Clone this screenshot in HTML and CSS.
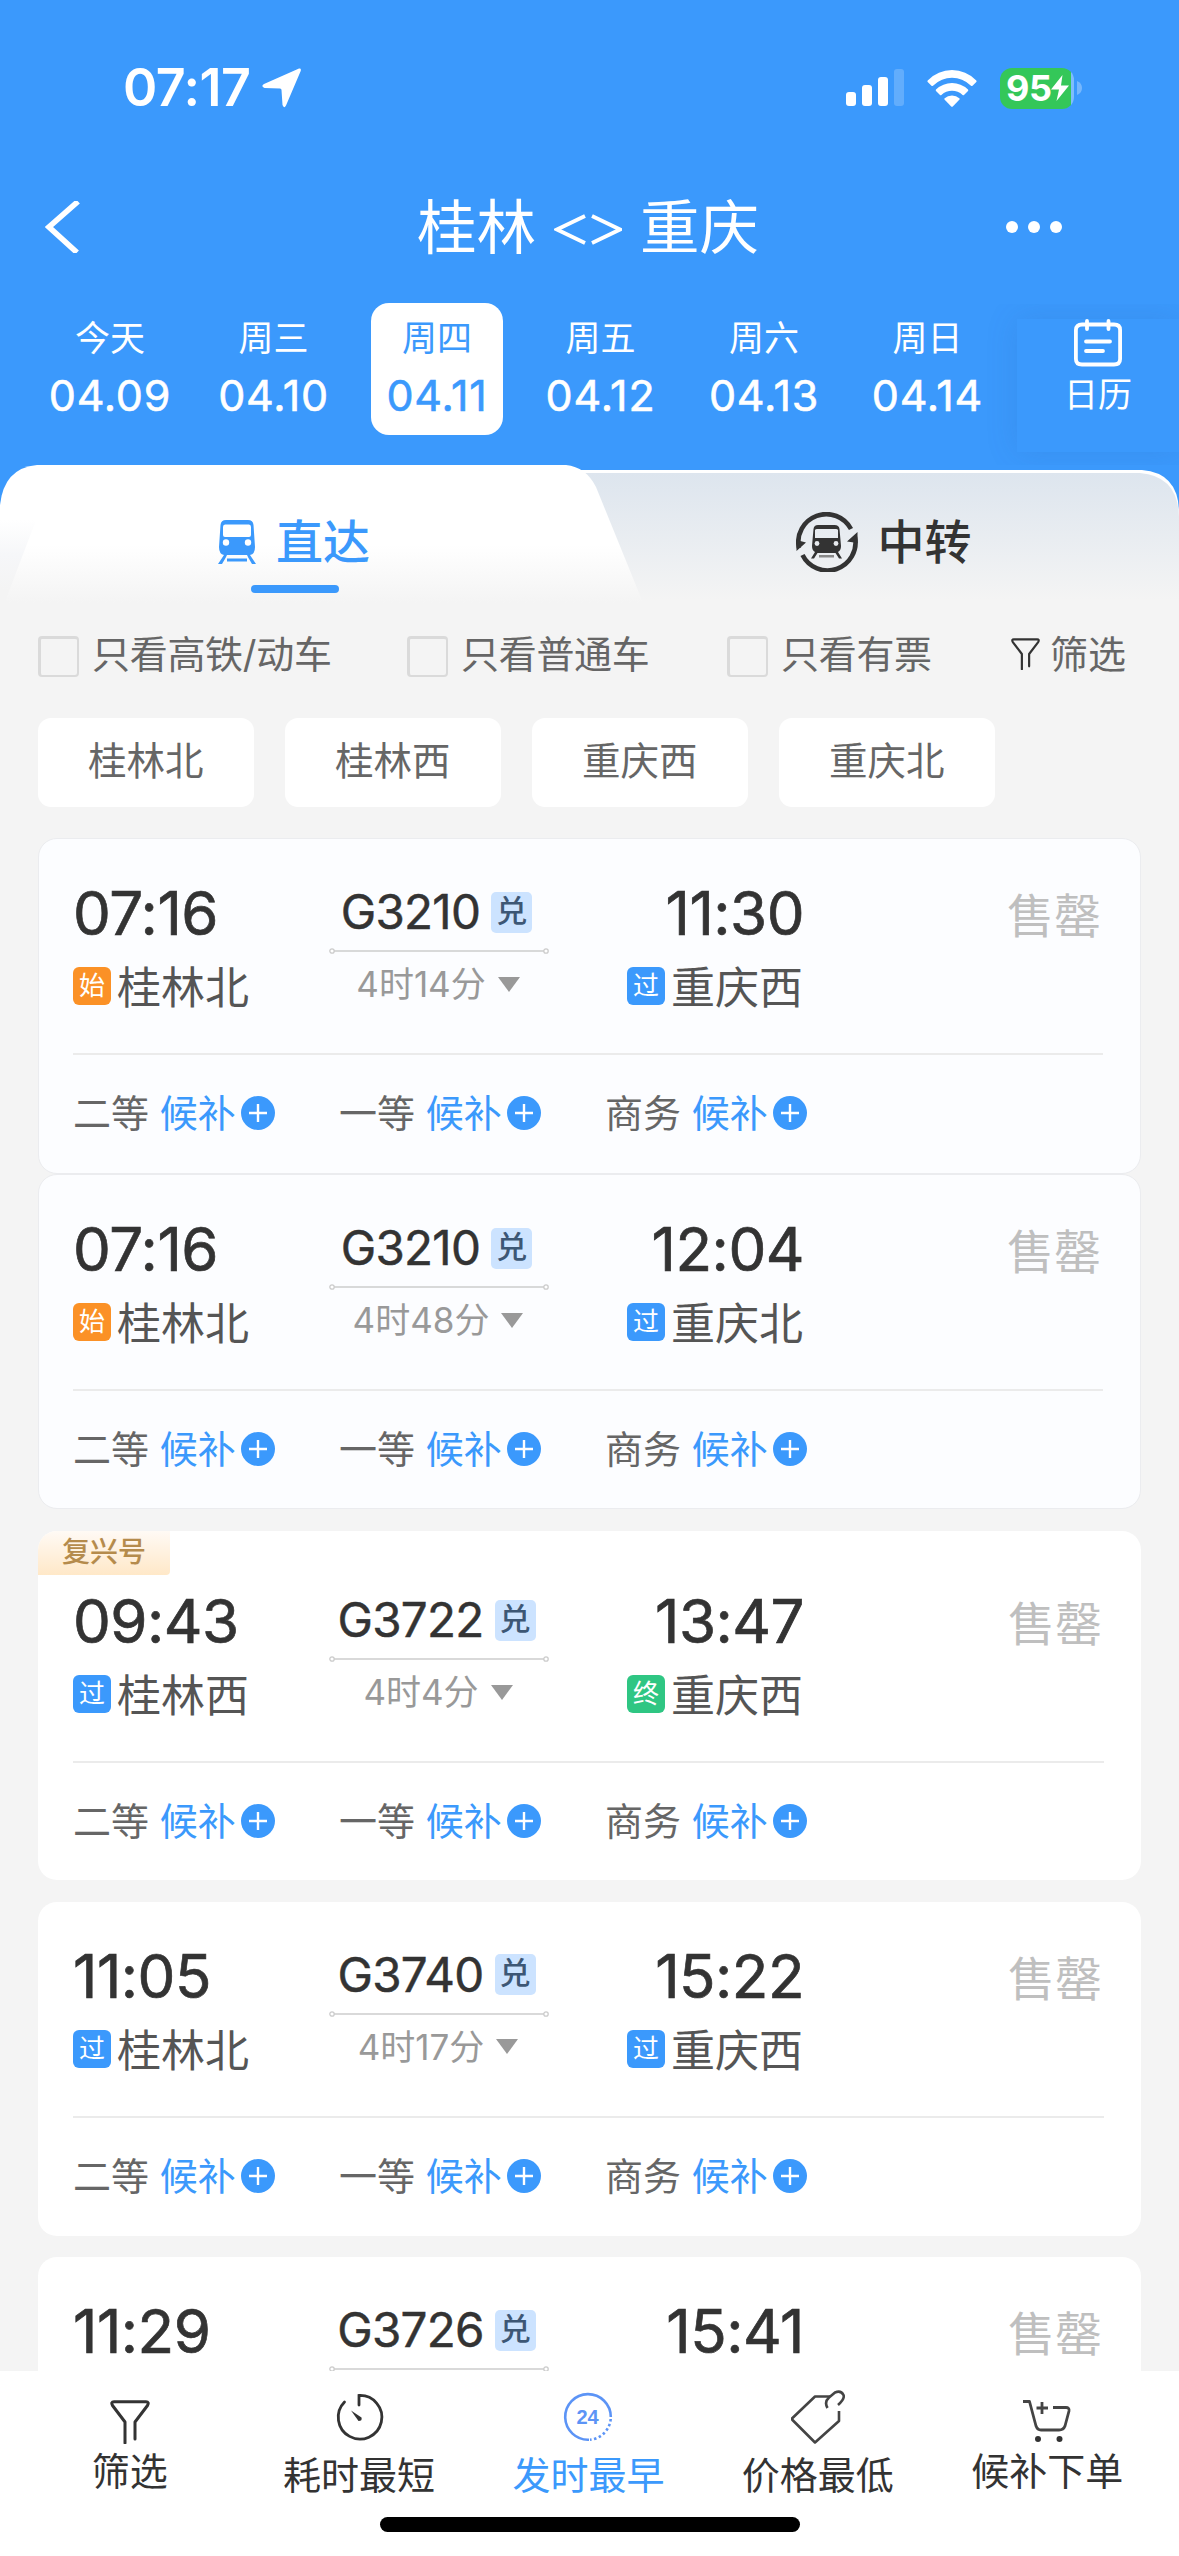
FILE: index.html
```
<!doctype html>
<html lang="zh-CN">
<head>
<meta charset="utf-8">
<meta name="viewport" content="width=device-width, initial-scale=1">
<title>桂林 - 重庆</title>
<link rel="stylesheet" href="styles.css">
</head>
<body>

<!-- shared icons -->
<svg class="sprite">
	<symbol id="funnel" viewBox="0 0 40 44">
		<path d="M15 43V22L2.500 5.500Q.500 1.800 4 1.800H36Q39.500 1.800 37.500 5.500L25 22V39" fill="none" stroke="#333" stroke-width="3" stroke-linecap="round" stroke-linejoin="round"/>
	</symbol>
	<symbol id="plus" viewBox="0 0 34 34">
		<circle cx="17" cy="17" r="17" fill="#3b99fc"/>
		<path d="M8 17H26M17 8V26" stroke="#fff" stroke-width="2.400"/>
	</symbol>
	<symbol id="line" viewBox="0 0 220 6">
		<path d="M5 3H215" stroke="#ccc" stroke-width="1.500"/>
		<circle cx="3" cy="3" r="2.200" fill="#fff" stroke="#ccc" stroke-width="1.300"/>
		<circle cx="217" cy="3" r="2.200" fill="#fff" stroke="#ccc" stroke-width="1.300"/>
	</symbol>
	<symbol id="down" viewBox="0 0 22 15">
		<path d="M0 0H22L11 15Z" fill="#999"/>
	</symbol>
</svg>

<div class="app">

	<header class="header">
		<div class="status">
			<span class="clock">07:17</span>
			<svg class="arrow" viewBox="0 0 39 40"><path d="M37 .500Q39.500 0 38.700 3L24 37.500Q22 41 20.500 37L19.500 22Q19.500 20.500 18 20.500L2.500 20Q-1.500 18.500 2 16Z" fill="#fff"/></svg>
			<svg class="signal" viewBox="0 0 58 38">
				<g fill="#fff">
					<rect x="0" y="23" width="10" height="14" rx="3"/>
					<rect x="16" y="16" width="10" height="21" rx="3"/>
					<rect x="32" y="8" width="10" height="29" rx="3"/>
					<rect x="48" y="0" width="10" height="37" rx="3" opacity=".2"/>
				</g>
			</svg>
			<svg class="wifi" viewBox="0 0 50 37">
				<g fill="#fff">
					<path d="M.700 10.500Q11 0 25 0T49.300 10.500Q50 11.300 49.300 12L45.500 15.800Q44.700 16.400 44 15.700Q35.500 7.800 25 7.800T6 15.700Q5.300 16.400 4.500 15.800L.700 12Q0 11.300 .700 10.500Z"/>
					<path d="M9 19.500Q16 13 25 13T41 19.500Q41.600 20.200 41 21L37 25Q36.300 25.500 35.600 24.900Q31 20.800 25 20.800T14.400 24.900Q13.700 25.500 13 25L9 21Q8.400 20.200 9 19.500Z"/>
					<path d="M17.700 28.300Q20.700 25.600 25 25.600T32.300 28.300Q33 29 32.300 29.800L25.800 36.500Q25 37.200 24.200 36.500L17.700 29.800Q17 29 17.700 28.300Z"/>
				</g>
			</svg>
			<div class="battery">
				<span>95</span>
				<svg class="bolt" viewBox="0 0 18 26"><path d="M11.500 0L0 14.500H8L5.500 26L18 10.500H10Z" fill="#fff"/></svg>
			</div>
			<svg class="nub" viewBox="0 0 5 14"><path d="M0 0Q5 2 5 7T0 14Z" fill="#fff" opacity=".3"/></svg>
		</div>

		<div class="nav">
			<svg class="back" viewBox="0 0 36 52"><path d="M33 .500L4 26L32 51.500" fill="none" stroke="#fff" stroke-width="5.600"/></svg>
			<h1 class="title"><span>桂林</span><svg class="swap" viewBox="0 0 68 32"><path d="M31 2L3 15.500L31 29M38 2L66 15.500L38 29" fill="none" stroke="#fff" stroke-width="3.800"/></svg><span>重庆</span></h1>
			<svg class="more" viewBox="0 0 56 14"><g fill="#fff"><circle cx="6" cy="7" r="6"/><circle cx="28" cy="7" r="6"/><circle cx="50" cy="7" r="6"/></g></svg>
		</div>

		<div class="dates">
			<div class="day"><span>今天</span><b>04.09</b></div>
			<div class="day"><span>周三</span><b>04.10</b></div>
			<div class="day active"><span>周四</span><b>04.11</b></div>
			<div class="day"><span>周五</span><b>04.12</b></div>
			<div class="day"><span>周六</span><b>04.13</b></div>
			<div class="day"><span>周日</span><b>04.14</b></div>
			<div class="calendar">
				<svg viewBox="0 0 48 48"><g fill="none" stroke="#fff" stroke-width="3.800" stroke-linecap="round"><path d="M16 5.500H32M10 5.500H8Q1.900 5.500 1.900 11V40Q1.900 45.500 8 45.500H40Q46.100 45.500 46.100 40V11Q46.100 5.500 40 5.500H8"/><path d="M13 2V10M34.500 2V10M12 22.500H36M12 32H29"/></g></svg>
				<span>日历</span>
			</div>
		</div>
	</header>

	<div class="tabs">
		<svg class="tabs-shape" viewBox="0 0 1179 150">
			<defs>
				<linearGradient id="grey" gradientUnits="userSpaceOnUse" x1="0" y1="8" x2="0" y2="135"><stop offset="0" stop-color="#dde5ee"/><stop offset="1" stop-color="#f4f4f4"/></linearGradient>
				<linearGradient id="white" gradientUnits="userSpaceOnUse" x1="0" y1="80" x2="0" y2="138"><stop offset="0" stop-color="#fff"/><stop offset="1" stop-color="#f4f4f4"/></linearGradient>
				<linearGradient id="edge" gradientUnits="userSpaceOnUse" x1="0" y1="55" x2="0" y2="125"><stop offset="0" stop-color="#fff"/><stop offset=".5" stop-color="#f6f7f9"/><stop offset="1" stop-color="#f4f4f4"/></linearGradient>
			</defs>
			<path d="M500 5H1142Q1179 8 1179 48V150H500Z" fill="#fff"/>
			<path d="M500 8H1140Q1178 11 1179 52V150H500Z" fill="url(#grey)"/>
			<path d="M0 40Q4 3 37 0H300V150H0Z" fill="url(#edge)"/>
			<path d="M37 0H566Q586 2 596 22L648 150H0L36 55Z" fill="url(#white)"/>
		</svg>
		<div class="tab on">
			<svg class="train" viewBox="0 0 40 44">
				<path d="M9 0H31Q36 0 36.500 5L38 27Q38 34 33 35L39 44H35L31.500 38L30 35H10L8.500 38L5 44H1L7 35Q2 34 2 27L3.500 5Q4 0 9 0ZM8 4.500Q6 4.500 6 7V15Q6 17 8 17H32Q34 17 34 15V7Q34 4.500 32 4.500Z" fill="#3b99fc" fill-rule="evenodd"/>
				<rect x="10" y="38.500" width="20" height="3" fill="#3b99fc"/>
				<circle cx="9" cy="22.500" r="3.200" fill="#fff"/><circle cx="31" cy="22.500" r="3.200" fill="#fff"/>
			</svg>
			<span>直达</span>
		</div>
		<div class="tab">
			<svg class="transfer" viewBox="0 0 62 60">
				<g fill="none" stroke="#333" stroke-width="4.600"><path d="M2.900 36A28 28 0 0 1 55 17"/><path d="M59 25A28 28 0 0 1 6.500 43"/></g>
				<path d="M.500 39V28L10 30.500ZM61.500 20V31L51 29.500Z" fill="#333"/>
				<path d="M22 13H38.500Q43 13 43.500 17L45 34Q45 38.500 42 40L46 46.500H43L39.500 41H21.500L18 46.500H15L19 40Q16 38.500 16 34L17.500 17Q18 13 22 13ZM19 18V26H42V18Q41.500 17 40 17H21Q19.500 17 19 18Z" fill="#333" fill-rule="evenodd"/>
				<rect x="23" y="43" width="15" height="2.500" fill="#888"/>
				<circle cx="21" cy="31.500" r="2.400" fill="#e8ebef"/><circle cx="40" cy="31.500" r="2.400" fill="#e8ebef"/>
			</svg>
			<span>中转</span>
		</div>
	</div>

	<div class="filters">
		<label class="check c1"><i></i><span>只看高铁/动车</span></label>
		<label class="check c2"><i></i><span>只看普通车</span></label>
		<label class="check c3"><i></i><span>只看有票</span></label>
		<div class="filter"><svg><use href="#funnel"/></svg>筛选</div>
	</div>

	<div class="chips">
		<span>桂林北</span>
		<span>桂林西</span>
		<span>重庆西</span>
		<span>重庆北</span>
	</div>

	<main class="list">

		<section class="card tint">
			<div class="trip">
				<div class="from"><time>07:16</time><p><i class="start">始</i>桂林北</p></div>
				<div class="train-no"><h2>G3210<i>兑</i></h2><svg class="line"><use href="#line"/></svg><p>4时14分<svg><use href="#down"/></svg></p></div>
				<div class="to"><time>11:30</time><p><i>过</i>重庆西</p></div>
				<div class="sold">售罄</div>
			</div>
			<div class="seats">
				<span>二等 <a>候补</a><svg><use href="#plus"/></svg></span>
				<span>一等 <a>候补</a><svg><use href="#plus"/></svg></span>
				<span>商务 <a>候补</a><svg><use href="#plus"/></svg></span>
			</div>
		</section>

		<section class="card tint">
			<div class="trip">
				<div class="from"><time>07:16</time><p><i class="start">始</i>桂林北</p></div>
				<div class="train-no"><h2>G3210<i>兑</i></h2><svg class="line"><use href="#line"/></svg><p>4时48分<svg><use href="#down"/></svg></p></div>
				<div class="to"><time>12:04</time><p><i>过</i>重庆北</p></div>
				<div class="sold">售罄</div>
			</div>
			<div class="seats">
				<span>二等 <a>候补</a><svg><use href="#plus"/></svg></span>
				<span>一等 <a>候补</a><svg><use href="#plus"/></svg></span>
				<span>商务 <a>候补</a><svg><use href="#plus"/></svg></span>
			</div>
		</section>

		<section class="card fuxing">
			<div class="ribbon">复兴号</div>
			<div class="trip">
				<div class="from"><time>09:43</time><p><i>过</i>桂林西</p></div>
				<div class="train-no"><h2>G3722<i>兑</i></h2><svg class="line"><use href="#line"/></svg><p>4时4分<svg><use href="#down"/></svg></p></div>
				<div class="to"><time>13:47</time><p><i class="end">终</i>重庆西</p></div>
				<div class="sold">售罄</div>
			</div>
			<div class="seats">
				<span>二等 <a>候补</a><svg><use href="#plus"/></svg></span>
				<span>一等 <a>候补</a><svg><use href="#plus"/></svg></span>
				<span>商务 <a>候补</a><svg><use href="#plus"/></svg></span>
			</div>
		</section>

		<section class="card">
			<div class="trip">
				<div class="from"><time>11:05</time><p><i>过</i>桂林北</p></div>
				<div class="train-no"><h2>G3740<i>兑</i></h2><svg class="line"><use href="#line"/></svg><p>4时17分<svg><use href="#down"/></svg></p></div>
				<div class="to"><time>15:22</time><p><i>过</i>重庆西</p></div>
				<div class="sold">售罄</div>
			</div>
			<div class="seats">
				<span>二等 <a>候补</a><svg><use href="#plus"/></svg></span>
				<span>一等 <a>候补</a><svg><use href="#plus"/></svg></span>
				<span>商务 <a>候补</a><svg><use href="#plus"/></svg></span>
			</div>
		</section>

		<section class="card last">
			<div class="trip">
				<div class="from"><time>11:29</time></div>
				<div class="train-no"><h2>G3726<i>兑</i></h2><svg class="line"><use href="#line"/></svg></div>
				<div class="to"><time>15:41</time></div>
				<div class="sold">售罄</div>
			</div>
		</section>

	</main>

	<footer class="footer">
		<nav class="toolbar">
			<div class="tool up">
				<svg class="t-funnel"><use href="#funnel"/></svg>
				<span>筛选</span>
			</div>
			<div class="tool">
				<svg viewBox="0 0 54 54"><g fill="none" stroke="#333" stroke-width="2.800" stroke-linecap="round"><path d="M27 15V5.500A21.800 21.800 0 1 1 12.500 12"/></g><path d="M19 20.500L29.500 27.500Q30.500 31 26.500 31Z" fill="#333"/></svg>
				<span>耗时最短</span>
			</div>
			<div class="tool on">
				<svg viewBox="0 0 54 54"><path d="M28 49.700A22.800 22.800 0 1 1 49.800 27" fill="none" stroke="#5c94f6" stroke-width="2.600"/><path d="M49.700 29A22.800 22.800 0 0 1 29 49.700" fill="none" stroke="#5c94f6" stroke-width="2.600" stroke-dasharray="2.500 2.500"/><text x="26.500" y="34" text-anchor="middle" class="h24">24</text></svg>
				<span>发时最早</span>
			</div>
			<div class="tool">
				<svg viewBox="0 0 54 54"><g fill="none" stroke="#444" stroke-width="2.600" stroke-linejoin="round"><path d="M48 21V31L24 52.500L1.500 30Q.500 29 1.500 28L24 6.500H39"/><path d="M36.500 18Q33 12 38 7.500L44 2.500Q50 0 52.500 5Q54 9 47 15"/></g></svg>
				<span>价格最低</span>
			</div>
			<div class="tool up">
				<svg viewBox="0 0 54 54"><g fill="none" stroke="#444" stroke-width="2.800" stroke-linejoin="round"><path d="M3 11.500H9.500L16 36Q17.500 40 21 40H39Q43.500 40 45 36L49 21Q49.500 17.500 46 17.500H33"/><path d="M22 12V24M16.500 18H28"/></g><circle cx="18" cy="49" r="3" fill="#333"/><circle cx="39.500" cy="49" r="3" fill="#333"/></svg>
				<span>候补下单</span>
			</div>
		</nav>
		<div class="home"></div>
	</footer>

</div>

</body>
</html>
```
FILE: styles.css
```
* { box-sizing: border-box; }
body { margin: 0; background: #f4f4f4; color: #333; font-family: Inter, "Noto Sans CJK SC", sans-serif; }
h1, h2, p { margin: 0; font-weight: 400; }
i { font-style: normal; }
svg { display: block; flex: none; }
.sprite { display: none; }

.app { display: flex; flex-direction: column; width: 1179px; height: 2556px; overflow: hidden; }

/* header */
.header { height: 465px; background: #3b99fc; color: #fff; flex: none; }
.status { display: flex; align-items: center; height: 176px; padding: 0 101px 0 123px; }
.clock { font-size: 52px; font-weight: 600; letter-spacing: -.5px; width: 139px; line-height: 60px; white-space: nowrap; }
.arrow { width: 39px; height: 40px; }
.signal { width: 58px; height: 38px; margin-left: auto; }
.wifi { width: 50px; height: 37px; margin: 0 23px; }
.battery { display: flex; align-items: center; width: 74px; height: 41px; padding-left: 6px; background: linear-gradient(90deg, #34c759 71px, #7fbdfd 71px); border-radius: 12px; font-size: 36px; font-weight: 700; letter-spacing: -.5px; }
.bolt { width: 18px; height: 26px; }
.nub { width: 5px; height: 14px; margin-left: 3px; margin-right: -4px; }

.nav { display: flex; align-items: center; height: 102px; padding: 0 117px 0 45px; }
.back { width: 36px; height: 52px; }
.title { display: flex; align-items: center; gap: 18px; font-size: 59.500px; line-height: 80px; margin-left: 336px; }
.swap { width: 68px; height: 32px; margin-top: 6px; }
.more { width: 56px; height: 14px; margin-left: auto; }

.dates { display: flex; padding: 25px 0 0 44px; }
.day { display: flex; flex-direction: column; align-items: center; width: 132px; height: 132px; margin-right: 31.500px; border-radius: 18px; white-space: nowrap; }
.day span { font-size: 35px; line-height: 40px; padding-top: 15px; }
.day b { font-size: 43px; font-weight: 400; line-height: 50px; margin-top: 12px; letter-spacing: .8px; -webkit-text-stroke: .6px; }
.day.active { background: #fff; color: #3b99fc; }
.calendar { display: flex; flex-direction: column; align-items: center; width: 162px; height: 133px; margin-top: 16px; margin-left: -8px; box-shadow: 0 0 30px rgba(40, 90, 160, .15); clip-path: inset(-15px 0 -13px -30px); background: #3b99fc; flex: none; }
.calendar svg { width: 48px; height: 48px; }
.calendar span { font-size: 34px; line-height: 40px; margin-top: 8px; }

/* tabs */
.tabs { position: relative; display: flex; height: 150px; background: linear-gradient(#3b99fc 60px, #f4f4f4 60px); flex: none; }
.tabs-shape { position: absolute; left: 0; top: 0; width: 1179px; height: 150px; }
.tab { position: relative; display: flex; align-items: center; gap: 20px; width: 590px; height: 154px; padding-left: 206px; font-size: 47px; font-weight: 500; line-height: 60px; }
.tab.on { color: #3b99fc; padding-left: 217px; gap: 19px; }
.tab.on::after { content: ""; position: absolute; left: 251px; top: 120px; width: 88px; height: 8px; border-radius: 4px; background: #3b99fc; }
.train { width: 40px; height: 44px; }
.transfer { width: 62px; height: 60px; }

/* filters */
.filters { display: flex; align-items: center; height: 82px; padding: 0 53px 0 38px; color: #666; font-size: 38px; white-space: nowrap; flex: none; }
.check { display: flex; align-items: center; gap: 13px; }
.check i { width: 41px; height: 41px; border: 3px solid #dadada; border-right-width: 2px; border-bottom-width: 2px; border-radius: 4px; }
.check span { line-height: 44px; margin-top: -5px; letter-spacing: -.3px; }
.c1 { width: 369px; }
.c2 { width: 320px; }
.filter { display: flex; align-items: center; gap: 10px; margin-left: auto; line-height: 44px; margin-top: -4px; }
.filter svg { width: 29px; height: 32px; }

.chips { display: flex; gap: 31.500px; padding: 21px 0 31px 38px; flex: none; }
.chips span { width: 215.500px; height: 89px; border-radius: 13px; background: #fff; color: #666; font-size: 38.500px; line-height: 86px; text-align: center; }

/* train list */
.list { flex: 1; min-height: 0; overflow: hidden; padding: 0 38px; }
.card { height: 334px; margin-bottom: 21.500px; padding: 0 37px 0 35px; border-radius: 19px; background: #fff; overflow: hidden; }
.card.tint { height: 336px; margin-bottom: 0; padding-left: 34px; border: 1px solid #ebecef; background: #fcfdff; }
.card.tint + .card.tint { height: 335px; }
.card.tint + .card:not(.tint) { margin-top: 22px; }
.card.fuxing { position: relative; height: 349px; padding-top: 16px; }
.ribbon { position: absolute; left: 0; top: 0; width: 132px; height: 44px; border-bottom-right-radius: 4px; background: linear-gradient(#fffaf5, #ffe8c8); color: #b58b4c; font-size: 28px; font-weight: 500; line-height: 43px; text-align: center; }

.trip { display: grid; grid-template-columns: 256px 220px 255px 1fr; height: 216px; padding-top: 40px; border-bottom: 2px solid #ebebeb; }
.trip time { display: block; font-size: 60px; font-weight: 400; line-height: 68px; letter-spacing: -.500px; -webkit-text-stroke: .7px; }
.from p, .to p { display: flex; align-items: center; gap: 6px; margin-top: 11px; color: #555; font-size: 44px; line-height: 60px; white-space: nowrap; }
.from p i, .to p i { width: 38px; height: 38px; border-radius: 6px; background: #3b99fc; color: #fff; font-size: 26px; line-height: 37px; text-align: center; margin-top: -4px; }
.from p i.start { background: #fb9126; }
.to p i.end { background: #2fc683; }
.to { display: flex; flex-direction: column; align-items: flex-end; }
.to p { margin-right: 1px; }
.train-no { display: flex; flex-direction: column; align-items: center; }
.train-no h2 { display: flex; align-items: center; gap: 11px; margin-right: 5px; font-size: 47.500px; font-weight: 400; line-height: 66px; letter-spacing: -.700px; -webkit-text-stroke: .5px; }
.train-no h2 i { width: 41px; height: 41px; border-radius: 5px; background: #cce3ff; color: #3d5775; font-size: 31px; font-weight: 500; line-height: 38px; text-align: center; letter-spacing: 0; -webkit-text-stroke: 0; }
.line { width: 220px; height: 6px; margin-top: 3px; }
.train-no p { display: flex; align-items: center; gap: 12px; margin-right: 2px; color: #999; font-size: 35px; line-height: 44px; margin-top: 8px; }
.train-no p svg { width: 22px; height: 15px; }
.sold { color: #bfbfbf; font-size: 47px; line-height: 73px; text-align: right; padding-right: 2px; }

.seats { display: grid; grid-template-columns: 266px 266px 266px; height: 118px; color: #666; font-size: 38px; line-height: 116px; }
.seats span { display: flex; align-items: center; height: 116px; white-space: pre; }
.seats a { color: #3b99fc; }
.seats svg { width: 34px; height: 34px; margin-left: 5px; }

/* bottom bar */
.footer { height: 185px; background: #fff; flex: none; }
.toolbar { display: flex; height: 146px; padding: 0 17px 0 15px; }
.tool { display: flex; flex-direction: column; align-items: center; width: 229.400px; padding-top: 19px; font-size: 38px; line-height: 50px; }
.tool svg { width: 54px; height: 54px; }
.tool .t-funnel { width: 40px; height: 44px; margin: 10px 0 0; }
.tool span { margin-top: 6px; }
.tool.up span { margin-top: 2px; }
.tool.on span { color: #3b99fc; }
.h24 { font: 700 20px "Liberation Sans", sans-serif; fill: #5c94f6; }
.home { width: 420px; height: 15px; margin: 0 auto; border-radius: 8px; background: #000; }
```
